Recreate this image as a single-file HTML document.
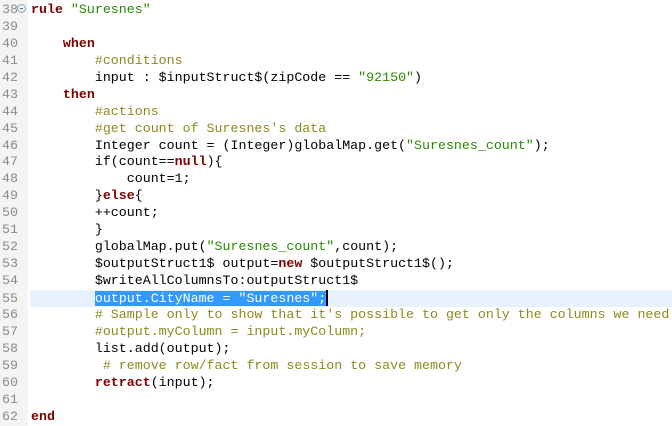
<!DOCTYPE html>
<html><head><style>
html,body{margin:0;padding:0;background:#fff;width:672px;height:426px;overflow:hidden}
body{position:relative;font-family:"Liberation Mono","Courier New",monospace;font-size:13.3px}
.g{position:absolute;left:0;top:0;width:28px;height:426px;background:#f4f4f4}
.l{position:absolute;left:0;height:17px;line-height:17px;white-space:pre;width:672px}
.n{position:absolute;left:2px;color:#8a8a8a}
.c{position:absolute;left:31px;color:#000}
.k{color:#7f0000;font-weight:bold}
.s{color:#2a8a00}
.m{color:#8c8a1c}
.hl{position:absolute;left:30px;top:290px;width:642px;height:17px;background:#e8f2fe}
.sel{background:#3399ff;color:#fff}
.cur{display:inline-block;width:2px;height:16px;background:#000;vertical-align:middle}
.fold{position:absolute;left:17px;top:4px;width:9px;height:9px;border-radius:50%;border:1px solid #8aa;background:#eef;box-sizing:border-box}
.fold:after{content:"";position:absolute;left:2px;top:3px;width:3px;height:1px;background:#567}
</style></head><body>
<div class="g"></div>
<div class="hl"></div>
<div class="fold"></div>
<div class="l" style="top:1px"><span class="n">38</span><span class="c"><span class="k">rule</span> <span class="s">"Suresnes"</span></span></div>
<div class="l" style="top:18px"><span class="n">39</span></div>
<div class="l" style="top:35px"><span class="n">40</span><span class="c">    <span class="k">when</span></span></div>
<div class="l" style="top:52px"><span class="n">41</span><span class="c">        <span class="m">#conditions</span></span></div>
<div class="l" style="top:69px"><span class="n">42</span><span class="c">        input : $inputStruct$(zipCode == <span class="s">"92150"</span>)</span></div>
<div class="l" style="top:86px"><span class="n">43</span><span class="c">    <span class="k">then</span></span></div>
<div class="l" style="top:103px"><span class="n">44</span><span class="c">        <span class="m">#actions</span></span></div>
<div class="l" style="top:120px"><span class="n">45</span><span class="c">        <span class="m">#get count of Suresnes's data</span></span></div>
<div class="l" style="top:137px"><span class="n">46</span><span class="c">        Integer count = (Integer)globalMap.get(<span class="s">"Suresnes_count"</span>);</span></div>
<div class="l" style="top:153px"><span class="n">47</span><span class="c">        if(count==<span class="k">null</span>){</span></div>
<div class="l" style="top:170px"><span class="n">48</span><span class="c">            count=1;</span></div>
<div class="l" style="top:187px"><span class="n">49</span><span class="c">        }<span class="k">else</span>{</span></div>
<div class="l" style="top:204px"><span class="n">50</span><span class="c">        ++count;</span></div>
<div class="l" style="top:221px"><span class="n">51</span><span class="c">        }</span></div>
<div class="l" style="top:238px"><span class="n">52</span><span class="c">        globalMap.put(<span class="s">"Suresnes_count"</span>,count);</span></div>
<div class="l" style="top:255px"><span class="n">53</span><span class="c">        $outputStruct1$ output=<span class="k">new</span> $outputStruct1$();</span></div>
<div class="l" style="top:272px"><span class="n">54</span><span class="c">        $writeAllColumnsTo:outputStruct1$</span></div>
<div class="l" style="top:290px"><span class="n">55</span><span class="c">        <span class="sel">output.CityName = "Suresnes";</span><span class="cur"></span></span></div>
<div class="l" style="top:306px"><span class="n">56</span><span class="c">        <span class="m"># Sample only to show that it's possible to get only the columns we need</span></span></div>
<div class="l" style="top:323px"><span class="n">57</span><span class="c">        <span class="m">#output.myColumn = input.myColumn;</span></span></div>
<div class="l" style="top:340px"><span class="n">58</span><span class="c">        list.add(output);</span></div>
<div class="l" style="top:357px"><span class="n">59</span><span class="c">         <span class="m"># remove row/fact from session to save memory</span></span></div>
<div class="l" style="top:374px"><span class="n">60</span><span class="c">        <span class="k">retract</span>(input);</span></div>
<div class="l" style="top:391px"><span class="n">61</span></div>
<div class="l" style="top:408px"><span class="n">62</span><span class="c"><span class="k">end</span></span></div>
</body></html>
